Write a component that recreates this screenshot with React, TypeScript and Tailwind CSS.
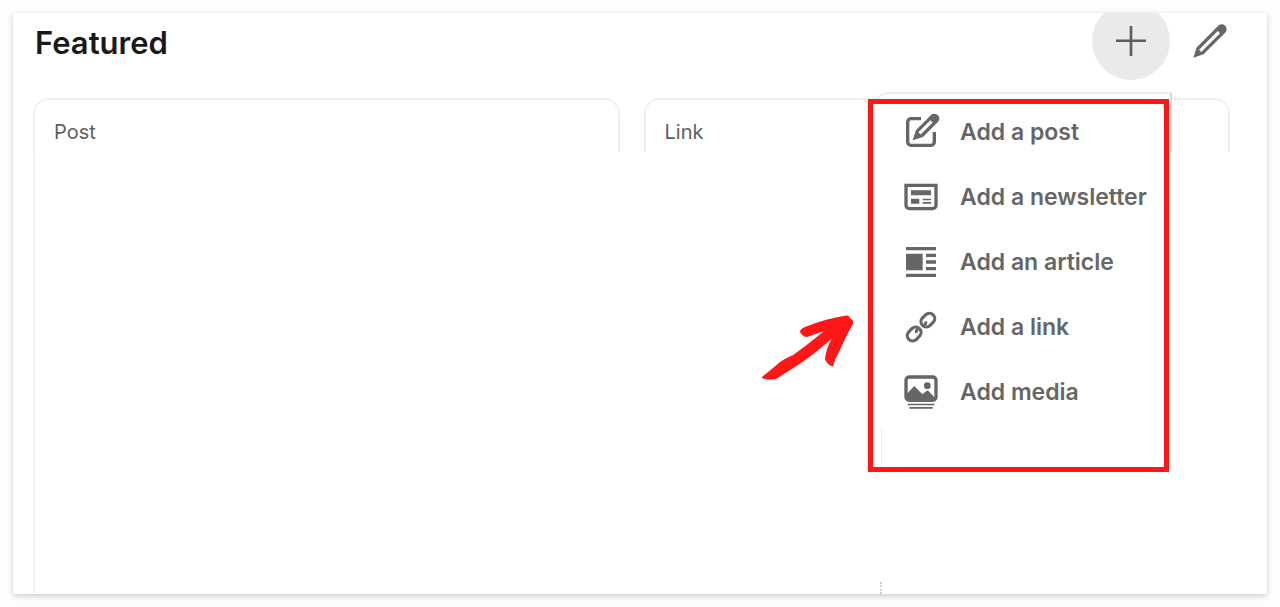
import type { ReactNode } from 'react';

const Icon = ({ children }: { children: ReactNode }) => (
  <svg viewBox="0 0 24 24" fill="currentColor" className="size-10 shrink-0" aria-hidden="true">
    {children}
  </svg>
);

const menuItems = [
  {
    label: 'Add a post',
    icon: (
      <path d="M19 12h2v6a3 3 0 01-3 3H6a3 3 0 01-3-3V6a3 3 0 013-3h6v2H6a1 1 0 00-1 1v12a1 1 0 001 1h12a1 1 0 001-1zm4-8a2.91 2.91 0 01-.87 2l-8.94 9L7 17l2-6.14 9-9A3 3 0 0123 4zm-4 2.35L17.64 5l-7.22 7.22 1.35 1.34z" />
    ),
  },
  {
    label: 'Add a newsletter',
    icon: (
      <path
        fillRule="evenodd"
        d="M2 4h20v13a3 3 0 01-3 3H5a3 3 0 01-3-3zm2 2v11a1 1 0 001 1h14a1 1 0 001-1V6zM6 8h12v3H6zM6 13h5v3H6zM13 13h5v1h-5zM13 15h5v1h-5z"
        clipRule="evenodd"
      />
    ),
  },
  {
    label: 'Add an article',
    icon: <path d="M3 3h18v2H3zM3 7h10v10H3zM15 7h6v2h-6zM15 11h6v2h-6zM15 15h6v2h-6zM3 19h18v2H3z" />,
  },
  {
    label: 'Add a link',
    icon: (
      <g fill="none" stroke="currentColor" strokeWidth="1.9">
        <rect x="-4.5" y="-3.2" width="9" height="6.4" rx="3.2" transform="translate(7.9 16.2) rotate(-45)" />
        <rect x="-4.5" y="-3.2" width="9" height="6.4" rx="3.2" transform="translate(16.1 7.9) rotate(-45)" />
        <path d="M9.2 15.6q-.4-1.6 1-2.2M14.8 8.6q.5 1.6-1 2.2" strokeWidth="1.7" />
      </g>
    ),
  },
  {
    label: 'Add media',
    icon: (
      <path
        fillRule="evenodd"
        d="M5 2h14a3 3 0 013 3v10a3 3 0 01-3 3H5a3 3 0 01-3-3V5a3 3 0 013-3zm0 2a1 1 0 00-1 1v7.6L8 8.4l4.8 5L16 11l4 4V5a1 1 0 00-1-1zM15.8 6.2a2 2 0 110 4 2 2 0 010-4zM4 19h16v1H4zM5 21h14v1H5z"
      />
    ),
  },
];

const PanelHeader = ({ title }: { title: string }) => (
  <h2 className="h-[54px] rounded-t-2xl border-2 border-b-0 border-[#efefef] pl-[19px] pt-[18px] text-xl leading-7 text-[#606060]">
    {title}
  </h2>
);

const App = () => {
  return (
    <div className="min-h-screen bg-[#fdfdfd] p-[13px] font-['Inter',sans-serif]">
      <main className="relative flex min-h-[581px] flex-col overflow-hidden bg-white pl-5 pr-[37px] shadow-[0_2px_6px_rgba(0,0,0,0.2)]">
        <header className="-mt-[11px] flex items-center">
          <h1 className="mr-auto pl-[2px] pt-1 text-[31px] font-semibold leading-10 text-[#191919]">Featured</h1>
          <button
            type="button"
            aria-label="Add featured"
            className="flex size-[78px] items-center justify-center rounded-full bg-[#eaeaea] text-[#5e5e5e]"
          >
            <Icon>
              <path d="M21 11.1v1.5h-8.2V21h-1.6v-8.4H3v-1.5h8.2V3h1.6v8.1z" />
            </Icon>
          </button>
          <button type="button" aria-label="Edit featured" className="ml-5 text-[#666]">
            <Icon>
              <path d="M21.13 2.86a3 3 0 00-4.17 0l-13 13L2 22l6.19-2L21.13 7a3 3 0 000-4.16zM6.77 18.57l-1.35-1.34L16.64 6 18 7.35z" />
            </Icon>
          </button>
        </header>

        <div className="mt-[18px] grid flex-1 grid-cols-2 gap-6">
          <section className="flex flex-col">
            <PanelHeader title="Post" />
            <div className="flex-1 border-l-2 border-[#f3f3f3]" />
          </section>
          <section>
            <PanelHeader title="Link" />
          </section>
        </div>

        {/* dropdown */}
        <div className="absolute right-[95px] top-[79px] h-[60px] w-[299px] rounded-tl-2xl border-2 border-b-0 border-[#ececec] border-r-[#d8d8d8] bg-white" />
        <ul className="absolute right-[98px] top-[86px] flex w-[301px] flex-col gap-[25px] border-5 border-[#ff1616] bg-white pl-7 pt-2">
          {menuItems.map((item) => (
            <li key={item.label}>
              <button
                type="button"
                className="flex h-10 items-center gap-[19px] whitespace-nowrap text-[23px] font-semibold leading-8 text-[#666]"
              >
                <Icon>{item.icon}</Icon>
                {item.label}
              </button>
            </li>
          ))}
          <li aria-hidden="true" className="-ml-5 -mt-2 h-[38px] border-l border-[#dff1fa]" />
        </ul>
        <div className="absolute bottom-0 right-[385px] h-3 border-l-2 border-dotted border-[#d0d0d0]" />

        {/* hand drawn arrow */}
        <svg
          viewBox="0 0 92 66"
          className="absolute right-[413px] top-[302px] w-[92px]"
          fill="#ff1616"
          aria-hidden="true"
        >
          <path d="M0 62Q10 54 18 47Q22 44 31 40Q44 31 62 16L45 22Q41 22 38 17Q38 14 43 12Q62 4 83 .7Q87 0 88 3Q92 5 91 9Q84 21 77 37Q73 43 71 51.5Q65 50 63 44Q64 34 69.5 24Q57 35 42 46Q27 56 14 64Q6 66 0 63Z" />
        </svg>
      </main>
    </div>
  );
};

export default App;
